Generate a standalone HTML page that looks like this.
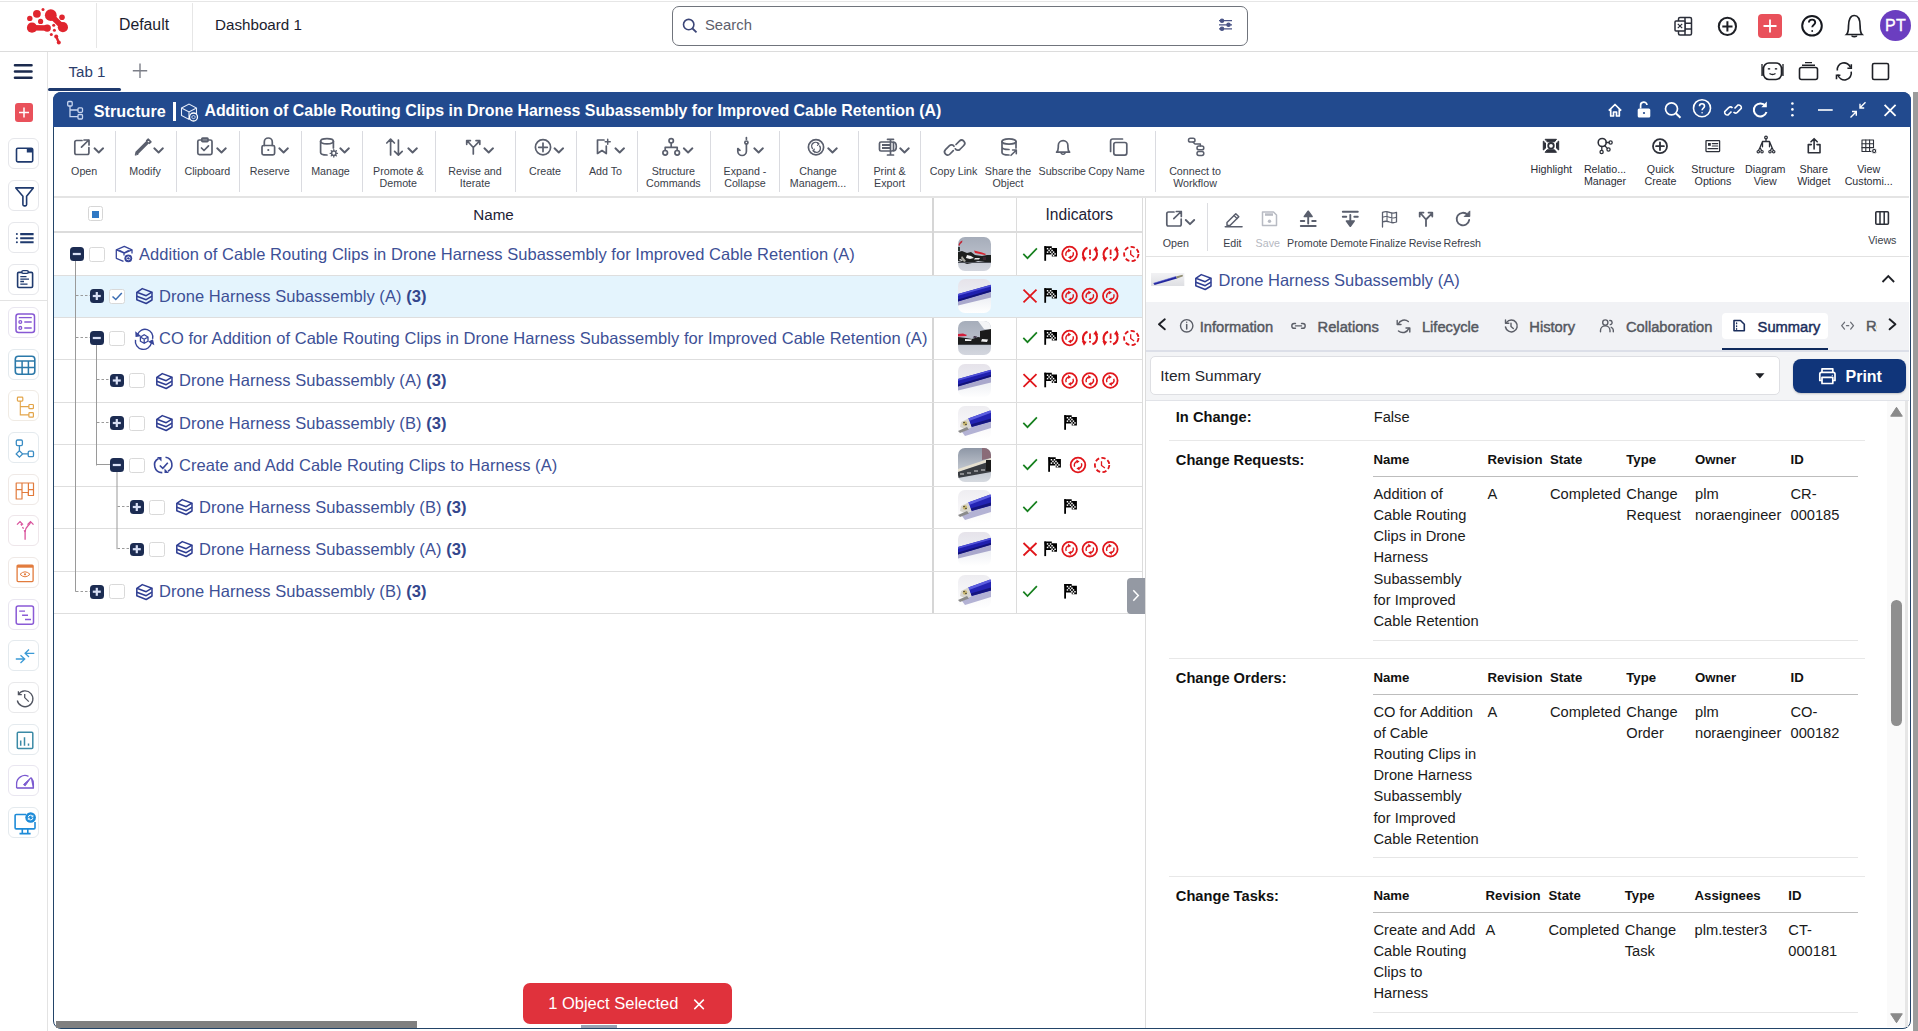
<!DOCTYPE html>
<html><head><meta charset="utf-8"><style>
*{box-sizing:border-box;margin:0;padding:0}
html,body{width:1918px;height:1031px;overflow:hidden;background:#fff;font-family:"Liberation Sans",sans-serif;color:#222}
body{position:relative}
.a{position:absolute}
svg.i{position:absolute;overflow:visible}
.hl{position:absolute;height:1px;background:#e3e3e3}
.vl{position:absolute;width:1px;background:#e3e3e3}
.t{position:absolute;white-space:nowrap;line-height:1}
.sb{position:absolute;left:8px;width:31px;height:31px;border:1px solid #e6e7eb;border-radius:6px;background:#fff}

.tl1{position:absolute;font-size:10.7px;line-height:12px;color:#3a3e49;white-space:nowrap;text-align:center;width:120px}
.tl2{position:absolute;font-size:10.7px;line-height:12px;color:#2b2e37;white-space:nowrap;text-align:center;width:120px}

.cb{position:absolute;width:15.5px;height:15px;border:1px solid #d9d9d9;border-radius:2.5px;background:#fff}
.xb{position:absolute;width:13.5px;height:13.5px;background:#1c2c52;border-radius:3.5px}
.nm{position:absolute;font-size:16.5px;color:#3d5096;white-space:nowrap;line-height:20px;letter-spacing:0.045px}
.nm b{font-weight:bold;color:#33468c}
.thumb{position:absolute;left:958px;width:33px;height:33.5px;border-radius:7px;overflow:hidden}

.rl{position:absolute;font-size:10.7px;line-height:12px;color:#3a3e49;white-space:nowrap;text-align:center;width:80px}
.tab{position:absolute;top:318.5px;font-size:14.7px;color:#55585f;white-space:nowrap;line-height:16px;-webkit-text-stroke:0.45px #55585f}

.sm{position:absolute;font-size:14.67px;color:#1a1a1a;white-space:nowrap;line-height:21px}
.sh{position:absolute;font-size:14.67px;font-weight:bold;color:#111;white-space:nowrap;line-height:21px}
.sh2{position:absolute;font-size:13.2px;font-weight:bold;color:#111;white-space:nowrap;line-height:21px}
</style></head><body>
<div class="hl" style="left:0;top:1px;width:1918px;background:#e6e6e6"></div>
<div class="hl" style="left:0;top:51px;width:1918px;background:#dcdcdc"></div>
<div class="vl" style="left:96px;top:3px;height:45px;background:#e6e6e6"></div>
<div class="vl" style="left:192px;top:3px;height:48px;background:#e6e6e6"></div>
<svg class="i" style="left:20px;top:4px" width="56" height="46" fill="#e0262f"><circle cx="23.0" cy="5.4" r="1.5"/><circle cx="16.9" cy="9.8" r="3.9"/><circle cx="9.8" cy="14.4" r="2.7"/><circle cx="20.6" cy="17.4" r="2.6"/><circle cx="12.0" cy="23.7" r="5.1"/><circle cx="27.2" cy="24.1" r="3.7"/><circle cx="30.8" cy="11.2" r="5.9"/><circle cx="42.9" cy="23.2" r="5.1"/><circle cx="42.0" cy="13.2" r="2.8"/><circle cx="33.7" cy="21.2" r="1.5"/><circle cx="34.4" cy="26.3" r="1.5"/><circle cx="31.3" cy="30.4" r="1.5"/><circle cx="36.2" cy="32.6" r="2.0"/><circle cx="38.8" cy="38.6" r="2.0"/><path d="M12 23.7 L27.2 24.1" stroke-width="5.5" stroke="#e0262f"/><path d="M30.8 11.2 L42.9 23.2" stroke-width="5.5" stroke="#e0262f"/><path d="M36.2 32.6 L38.8 38.6" stroke-width="2.4" stroke="#e0262f"/></svg>
<div class="t" style="left:119px;top:17px;font-size:15.8px;color:#1b1d2e">Default</div>
<div class="t" style="left:215px;top:17px;font-size:15.2px;color:#1b1d2e">Dashboard 1</div>
<div class="a" style="left:672px;top:6px;width:576px;height:40px;border:1.2px solid #70747c;border-radius:7px"></div>
<svg class="i" style="left:0;top:0" width="1" height="1"><circle cx="688.7" cy="24.6" r="5.2" fill="none" stroke="#3b4577" stroke-width="1.6"/><path d="M692.5 28.5 L696.5 32.3" stroke="#3b4577" stroke-width="1.8"/></svg>
<div class="t" style="left:705px;top:18.2px;font-size:14.8px;color:#5d606c">Search</div>
<svg class="i" style="left:0;top:0" width="1" height="1" stroke="#4a5486" stroke-width="1.3" fill="#4a5486"><path d="M1219 20.7H1232M1219 24.8H1232M1219 28.8H1232"/><circle cx="1222" cy="20.7" r="1.6"/><circle cx="1228.5" cy="24.8" r="1.6"/><circle cx="1222" cy="28.8" r="1.6"/></svg>
<svg class="i" style="left:0;top:0" width="1" height="1" fill="none" stroke="#2a2d38" stroke-width="1.5"><rect x="1678.5" y="17.5" width="13" height="17.5" rx="1.5"/><path d="M1678.5 23.3H1691.5M1678.5 29.1H1691.5M1685 17.5V35"/><rect x="1675" y="21" width="10" height="10" rx="1" fill="#fff"/><path d="M1677.8 23.8L1682.2 28.2M1682.2 23.8L1677.8 28.2" stroke-width="1.2"/></svg>
<svg class="i" style="left:0;top:0" width="1" height="1" fill="none" stroke="#1e2026" stroke-width="2"><circle cx="1727.4" cy="26.4" r="8.6"/><path d="M1727.4 21.3V31.5M1722.3 26.4H1732.5"/></svg>
<div class="a" style="left:1758px;top:14px;width:24px;height:24px;background:#e9515b;border-radius:4px"></div>
<svg class="i" style="left:0;top:0" width="1" height="1" stroke="#fff" stroke-width="1.8"><path d="M1770 19.5V32.5M1763.5 26H1776.5"/></svg>
<svg class="i" style="left:0;top:0" width="1" height="1" fill="none" stroke="#16181f" stroke-width="2"><circle cx="1812" cy="25.8" r="9.8"/><path d="M1808.9 22.6C1808.9 20.8 1810.3 19.6 1812.1 19.6C1813.9 19.6 1815.2 20.9 1815.2 22.5C1815.2 24.6 1812.2 24.8 1812.2 27.3" stroke-width="1.9"/><circle cx="1812.2" cy="31" r="0.9" fill="#16181f" stroke="none"/></svg>
<svg class="i" style="left:0;top:0" width="1" height="1" fill="none" stroke="#1e2026" stroke-width="1.7"><path d="M1846.5 34.5C1848.5 32.5 1848.5 30 1848.5 26C1848.5 19.5 1850.5 15.5 1854.3 15.5C1858.1 15.5 1860.1 19.5 1860.1 26C1860.1 30 1860.1 32.5 1862.1 34.5Z"/><path d="M1852 35.5C1852 37 1856.6 37 1856.6 35.5"/></svg>
<div class="a" style="left:1880px;top:10px;width:31px;height:31px;background:#6b3ec0;border-radius:50%"></div>
<div class="t" style="left:1880px;top:18px;width:31px;text-align:center;font-size:16px;color:#fff;letter-spacing:0.3px;-webkit-text-stroke:0.35px #fff">PT</div>
<div class="vl" style="left:47px;top:52px;height:979px;background:#e3e3e3"></div>
<div class="hl" style="left:0;top:300px;width:47px;background:#e3e3e3"></div>
<svg class="i" style="left:0;top:0" width="1" height="1" stroke="#1b2a4e" stroke-width="2.6" stroke-linecap="round"><path d="M15 65.3H31.5M15 71.5H31.5M15 77.8H31.5"/></svg>
<div class="a" style="left:15px;top:103px;width:18px;height:19px;background:#e9515b;border-radius:3px"></div>
<svg class="i" style="left:0;top:0" width="1" height="1" stroke="#fff" stroke-width="1.5"><path d="M24 107.5V117.5M19 112.5H29"/></svg>
<div class="sb" style="top:138px;border-color:#e6e7eb"><svg class="i" width="31" height="31" fill="none" stroke="#1f3a6e" stroke-width="1.35"><rect x="7.5" y="9.3" width="16.2" height="13.6" rx="1.3" stroke-width="1.6"/><rect x="17.8" y="9.3" width="5.9" height="4.2" fill="#1f3a6e" stroke="none"/></svg></div>
<div class="sb" style="top:180px;border-color:#e6e7eb"><svg class="i" width="31" height="31" fill="none" stroke="#1f3a6e" stroke-width="1.35"><path d="M6.8 6.9H24.3L17.6 15.2V23.6Q17.6 24.9 16.4 24.9H15.1Q13.9 24.9 13.9 23.6V15.2Z" stroke-linejoin="round" stroke-width="1.6"/></svg></div>
<div class="sb" style="top:222px;border-color:#e6e7eb"><svg class="i" width="31" height="31" fill="none" stroke="#1f3a6e" stroke-width="1.35"><path d="M11.2 11.1H24.6M11.2 15.3H24.6M11.2 19.3H24.6" stroke-width="2.1"/><circle cx="7.9" cy="11.1" r="1" fill="#1f3a6e" stroke="none"/><circle cx="7.9" cy="15.3" r="1" fill="#1f3a6e" stroke="none"/><circle cx="7.9" cy="19.3" r="1" fill="#1f3a6e" stroke="none"/></svg></div>
<div class="sb" style="top:264px;border-color:#e6e7eb"><svg class="i" width="31" height="31" fill="none" stroke="#1f3a6e" stroke-width="1.35"><rect x="8.6" y="7.4" width="15" height="15.1" rx="1.2" stroke-width="1.6"/><rect x="12.8" y="5.6" width="6.5" height="2.8" rx="1.3" fill="#fff" stroke-width="1.4"/><path d="M11.3 11.6H17.5M11.3 14.2H20M11.3 16.5H15M11.3 19.2H18.5" stroke-width="1.3"/></svg></div>
<div class="sb" style="top:307px;border-color:#e9e6f0"><svg class="i" width="31" height="31" fill="none" stroke="#8758d4" stroke-width="1.35"><rect x="7" y="6.1" width="18.5" height="18.4" rx="2.5" stroke-width="1.5"/><path d="M9.8 9.6H22.8" stroke-width="1.3"/><circle cx="11.3" cy="14" r="1.4" stroke-width="1.3"/><circle cx="11.3" cy="19.9" r="1.4" stroke-width="1.3"/><path d="M15.3 14H22.7M15.3 19.9H22.7" stroke-width="1.5"/></svg></div>
<div class="sb" style="top:349px;border-color:#e4eaee"><svg class="i" width="31" height="31" fill="none" stroke="#2b79a9" stroke-width="1.35"><rect x="6.3" y="6.3" width="19.5" height="18" rx="3" stroke-width="1.6"/><path d="M6.3 10.9H25.8M6.3 17.5H25.8M13.1 10.9V24.3M19.4 10.9V24.3" stroke-width="1.5"/></svg></div>
<div class="sb" style="top:390px;border-color:#f0ebe4"><svg class="i" width="31" height="31" fill="none" stroke="#e3a54a" stroke-width="1.35"><rect x="8.4" y="6.1" width="5.4" height="4" rx="0.8" stroke-width="1.2"/><rect x="19.9" y="13.5" width="4.5" height="4.2" rx="0.8" stroke-width="1.2"/><rect x="19.9" y="21.6" width="4.5" height="4.6" rx="0.8" stroke-width="1.2"/><path d="M11.3 10.1V23.9H19.9M11.3 15.6H19.9" stroke-width="1.1"/></svg></div>
<div class="sb" style="top:432px;border-color:#e4eaee"><svg class="i" width="31" height="31" fill="none" stroke="#3a8cc4" stroke-width="1.35"><rect x="7.3" y="7" width="6.1" height="5.6" rx="1.3" stroke-width="1.3"/><rect x="19.2" y="18.2" width="5.3" height="5.4" rx="1.2" stroke-width="1.3"/><path d="M10.4 12.6V17.7M10.4 17.7L13.6 20.9L10.4 24.1L7.2 20.9Z M13.6 20.9H19.2" stroke-width="1.3"/></svg></div>
<div class="sb" style="top:474px;border-color:#efe9e6"><svg class="i" width="31" height="31" fill="none" stroke="#e27b3c" stroke-width="1.35"><path d="M7.2 8H24.5V20.5H19.4V17.5H13V24H7.2Z" stroke-width="1.2" stroke-linejoin="round"/><path d="M13 8V17.5M19.4 8V20.5M7.2 14.6H13M19.4 14.6H24.5" stroke-width="1.2"/></svg></div>
<div class="sb" style="top:515px;border-color:#eee6ea"><svg class="i" width="31" height="31" fill="none" stroke="#d9539c" stroke-width="1.35"><path d="M16.1 23.7V16Q16.1 12.5 19 9.8Q21.5 7.5 21.5 6" stroke-width="1.3"/><path d="M16.1 16L11 6" stroke-width="1.3" stroke-dasharray="2 1.6"/><path d="M18.5 8.6L21.5 5.6L24.5 8.6M8 8.6L11 5.6L14 8.6" stroke-width="1.3"/></svg></div>
<div class="sb" style="top:557px;border-color:#efe9e6"><svg class="i" width="31" height="31" fill="none" stroke="#e27b3c" stroke-width="1.35"><rect x="8.1" y="7.1" width="16" height="16.5" rx="1" stroke-width="1.3"/><rect x="8.1" y="7.1" width="16" height="2.6" fill="#e27b3c" stroke="none"/><path d="M11 16.3Q16 11.3 21 16.3Q16 21.3 11 16.3Z" stroke-width="1"/><circle cx="16" cy="16.3" r="1.1" fill="#e27b3c" stroke="none"/></svg></div>
<div class="sb" style="top:599px;border-color:#e9e6f0"><svg class="i" width="31" height="31" fill="none" stroke="#8a5ad6" stroke-width="1.35"><rect x="7.2" y="6.1" width="17.3" height="18.1" rx="2" stroke-width="1.5"/><path d="M10.2 11.1H16M13.1 15.3H19M16 19.5H22" stroke-width="1.4"/></svg></div>
<div class="sb" style="top:640px;border-color:#e4eaee"><svg class="i" width="31" height="31" fill="none" stroke="#3b9ad6" stroke-width="1.35"><path d="M6.8 18H15.7M11.5 14.3L15.7 18L11.5 22M25.3 12.3H16.1M20 8.5L16.1 12.3L20 16" stroke-width="1.3"/></svg></div>
<div class="sb" style="top:682px;border-color:#e8e8ea"><svg class="i" width="31" height="31" fill="none" stroke="#505460" stroke-width="1.35"><path d="M9.5 11.3A7.9 7.9 0 1 1 8.3 17.5" stroke-width="1.3"/><path d="M9.4 8.2V11.6H12.8" stroke-width="1.3"/><path d="M15.7 10.9V14.6L19.8 18.6" stroke-width="1.3"/></svg></div>
<div class="sb" style="top:724px;border-color:#e4eaee"><svg class="i" width="31" height="31" fill="none" stroke="#3b8aa6" stroke-width="1.35"><rect x="8.3" y="7.3" width="15.5" height="16.2" rx="1" stroke-width="1.5"/><path d="M11.7 15.5V20.8M15.5 12.3V20.8M19.5 18.5V20.8" stroke-width="1.5"/></svg></div>
<div class="sb" style="top:765px;border-color:#e9e6f0"><svg class="i" width="31" height="31" fill="none" stroke="#7b5ad0" stroke-width="1.35"><path d="M7.6 22V18A8.4 8.4 0 0 1 19.5 10.3M22.5 12.2A8.4 8.4 0 0 1 24.4 18V22Z" stroke-width="1.3" stroke-linejoin="round"/><path d="M7.6 22H24.4" stroke-width="1.6"/><path d="M14.5 18.6L22 11.6L16.2 19.8Z" fill="#7b5ad0" stroke-width="1"/></svg></div>
<div class="sb" style="top:807px;border-color:#e4eaee"><svg class="i" width="31" height="31" fill="none" stroke="#1d8bd8" stroke-width="1.35"><path d="M17 6.5H7.2Q6.1 6.5 6.1 7.6V19.8Q6.1 20.9 7.2 20.9H24.9Q26 20.9 26 19.8V14" stroke-width="1.6"/><path d="M13.3 21V25M18.8 21V25M10.5 25.6H21.6" stroke-width="1.6"/><circle cx="21.6" cy="9.5" r="5.3" fill="#1d8bd8" stroke="none"/><path d="M19.2 9.3Q19.5 7.2 21.6 7.2Q22.9 7.2 23.7 8.3M24 9.8Q23.7 11.9 21.6 11.9Q20.3 11.9 19.5 10.8" stroke="#fff" stroke-width="1"/><path d="M23.9 7.2V8.8H22.3M19.3 11.9V10.3H20.9" stroke="#fff" stroke-width="0.9"/></svg></div>
<div class="t" style="left:68.5px;top:63.6px;font-size:15.1px;color:#2b3d6c">Tab 1</div>
<div class="a" style="left:48px;top:88px;width:73px;height:2.5px;background:#1f3a6e;border-radius:2px"></div>
<svg class="i" style="left:0;top:0" width="1" height="1" stroke="#7c7f88" stroke-width="1.4"><path d="M140 63.5V78M132.8 70.8H147.2"/></svg>
<svg class="i" style="left:0;top:0" width="1" height="1" fill="none" stroke="#1e2026" stroke-width="1.6"><rect x="1763.5" y="63" width="18" height="16.5" rx="5.5"/><path d="M1762.2 67V75.5M1782.8 67V75.5M1762 64V76M1783 64V76" stroke-width="1.3"/><path d="M1768 69.3Q1769 68 1770 69.3M1775 69.3Q1776 68 1777 69.3" stroke-width="1.3"/><path d="M1769.5 73.5Q1772.5 75.5 1775.5 73.5" stroke-width="1.5"/><rect x="1799.5" y="67.5" width="18" height="12" rx="2"/><path d="M1802 65.2H1815M1805 62.6H1812" stroke-width="1.4"/><path d="M1850.5 67.5A6.8 6.8 0 0 0 1837.3 70.5M1837.8 74.6A6.8 6.8 0 0 0 1851.2 71.6" /><path d="M1851.3 64.3V68.2H1847.4M1836.5 79.2V75.3H1840.4" /><rect x="1872.5" y="63.5" width="16" height="16" rx="1.5"/></svg>
<div class="a" style="left:53px;top:92px;width:1858px;height:937px;border:1.5px solid #234468;border-radius:8px;background:#fff"></div>
<div class="a" style="left:53px;top:92px;width:1858px;height:35px;background:#224a8e;border-radius:8px 8px 0 0"></div>
<div class="a" style="left:1913px;top:92px;width:5px;height:939px;background:#9c9c9c"></div>
<svg class="i" style="left:0;top:0" width="1" height="1" fill="none" stroke="#c9d6ef" stroke-width="1.3"><rect x="67.7" y="101.5" width="4.5" height="4.5" rx="1"/><rect x="78" y="107.8" width="4.5" height="4.5" rx="1"/><rect x="78" y="114.5" width="4.5" height="4.5" rx="1"/><path d="M70 106V116.7H78M70 110H78"/></svg>
<div class="t" style="left:93.8px;top:103.3px;font-size:16.2px;font-weight:bold;color:#fff">Structure</div>
<div class="a" style="left:172.5px;top:101.5px;width:3px;height:19px;background:#fff"></div>
<svg class="i" style="left:0;top:0" width="1" height="1" fill="none" stroke="#e8eefa" stroke-width="1.1"><path d="M181.5 108L189 104L196.5 108V115.5L189 119.5L181.5 115.5Z M181.5 108L189 112L196.5 108M189 112V119.5"/><circle cx="193.5" cy="117" r="4" fill="#224a8e" stroke="#fff" stroke-width="1.3"/><path d="M191.5 116.6Q193.5 114.5 195.5 116.6M191.5 117.6Q193.5 119.7 195.5 117.6" stroke-width="0.9"/></svg>
<div class="t" style="left:204.4px;top:103.3px;font-size:15.93px;font-weight:bold;color:#fff">Addition of Cable Routing Clips in Drone Harness Subassembly for Improved Cable Retention (A)</div>
<svg class="i" style="left:0;top:0" width="1" height="1" fill="none" stroke="#fff" stroke-width="1.7"><path d="M1608.8 110.6L1615 104.5L1621.2 110.6M1610.7 109V116H1613.5V112H1616.5V116H1619.3V109" stroke-linejoin="round"/><rect x="1637.7" y="108.5" width="12.6" height="9" rx="1.5" fill="#fff" stroke="none"/><path d="M1640.6 108.5V105.5A3.2 3.2 0 0 1 1647 105"/><circle cx="1644" cy="113" r="1.1" fill="#224a8e" stroke="none"/><circle cx="1671.5" cy="108.8" r="6"/><path d="M1675.8 113.2L1680.5 117.8" stroke-width="2"/><circle cx="1702" cy="108.2" r="8.5" stroke-width="1.6"/><path d="M1699.5 106.3C1699.5 104.8 1700.6 103.8 1702 103.8C1703.5 103.8 1704.5 104.9 1704.5 106.2C1704.5 108 1702.1 108.2 1702.1 110.3" stroke-width="1.6"/><circle cx="1702.1" cy="112.8" r="0.8" fill="#fff" stroke="none"/><path d="M1731.5 111.5L1728 115A2.8 2.8 0 0 1 1724.7 111.6L1728.7 107.7A2.8 2.8 0 0 1 1732.5 108M1734.5 108.5L1738 105A2.8 2.8 0 0 1 1741.3 108.4L1737.3 112.3A2.8 2.8 0 0 1 1733.5 112" stroke-width="1.6"/><path d="M1765.5 106A6.5 6.5 0 1 0 1766.5 112" stroke-width="2"/><path d="M1766.8 101.5V107.2H1761.3Z" fill="#fff" stroke="none"/><circle cx="1792.4" cy="103.5" r="1.3" fill="#fff" stroke="none"/><circle cx="1792.4" cy="109.4" r="1.3" fill="#fff" stroke="none"/><circle cx="1792.4" cy="115.2" r="1.3" fill="#fff" stroke="none"/><path d="M1818 110H1832.7" stroke-width="1.6"/><path d="M1850.5 117.5L1856 112M1852 111.5H1856.3V115.8M1865.5 102.2L1860 107.7M1860 103.8V108H1864.2" stroke-width="1.4"/><path d="M1884.6 104.8L1895.6 115.8M1895.6 104.8L1884.6 115.8" stroke-width="1.8"/></svg>
<div class="a" style="left:114.5px;top:131px;width:1px;height:61px;background:#dadbe0"></div>
<div class="a" style="left:175.5px;top:131px;width:1px;height:61px;background:#dadbe0"></div>
<div class="a" style="left:239.0px;top:131px;width:1px;height:61px;background:#dadbe0"></div>
<div class="a" style="left:300.5px;top:131px;width:1px;height:61px;background:#dadbe0"></div>
<div class="a" style="left:361.5px;top:131px;width:1px;height:61px;background:#dadbe0"></div>
<div class="a" style="left:435.0px;top:131px;width:1px;height:61px;background:#dadbe0"></div>
<div class="a" style="left:514.6px;top:131px;width:1px;height:61px;background:#dadbe0"></div>
<div class="a" style="left:575.6px;top:131px;width:1px;height:61px;background:#dadbe0"></div>
<div class="a" style="left:636.6px;top:131px;width:1px;height:61px;background:#dadbe0"></div>
<div class="a" style="left:710.4px;top:131px;width:1px;height:61px;background:#dadbe0"></div>
<div class="a" style="left:779.0px;top:131px;width:1px;height:61px;background:#dadbe0"></div>
<div class="a" style="left:857.7px;top:131px;width:1px;height:61px;background:#dadbe0"></div>
<div class="a" style="left:920.3px;top:131px;width:1px;height:61px;background:#dadbe0"></div>
<div class="a" style="left:1155.2px;top:131px;width:1px;height:61px;background:#dadbe0"></div>
<div class="a" style="left:54px;top:196px;width:1855px;height:2px;background:#e4e4e4"></div>
<div class="tl1" style="left:24.2px;top:164.5px">Open</div>
<div class="tl1" style="left:85.0px;top:164.5px">Modify</div>
<div class="tl1" style="left:147.3px;top:164.5px">Clipboard</div>
<div class="tl1" style="left:209.7px;top:164.5px">Reserve</div>
<div class="tl1" style="left:270.5px;top:164.5px">Manage</div>
<div class="tl1" style="left:338.3px;top:164.5px">Promote &amp;<br>Demote</div>
<div class="tl1" style="left:415.0px;top:164.5px">Revise and<br>Iterate</div>
<div class="tl1" style="left:485.0px;top:164.5px">Create</div>
<div class="tl1" style="left:545.5px;top:164.5px">Add To</div>
<div class="tl1" style="left:613.4px;top:164.5px">Structure<br>Commands</div>
<div class="tl1" style="left:685.0px;top:164.5px">Expand -<br>Collapse</div>
<div class="tl1" style="left:758.0px;top:164.5px">Change<br>Managem...</div>
<div class="tl1" style="left:829.5px;top:164.5px">Print &amp;<br>Export</div>
<div class="tl1" style="left:893.6px;top:164.5px">Copy Link</div>
<div class="tl1" style="left:948.0px;top:164.5px">Share the<br>Object</div>
<div class="tl1" style="left:1002.3px;top:164.5px">Subscribe</div>
<div class="tl1" style="left:1056.4px;top:164.5px">Copy Name</div>
<div class="tl1" style="left:1135.0px;top:164.5px">Connect to<br>Workflow</div>
<div class="tl2" style="left:1491.3px;top:162.5px">Highlight</div>
<div class="tl2" style="left:1545.0px;top:162.5px">Relatio...<br>Manager</div>
<div class="tl2" style="left:1600.5px;top:162.5px">Quick<br>Create</div>
<div class="tl2" style="left:1653.0px;top:162.5px">Structure<br>Options</div>
<div class="tl2" style="left:1705.3px;top:162.5px">Diagram<br>View</div>
<div class="tl2" style="left:1753.8px;top:162.5px">Share<br>Widget</div>
<div class="tl2" style="left:1808.7px;top:162.5px">View<br>Customi...</div>
<svg class="i" style="left:0;top:0" width="1" height="1" fill="none" stroke="#5a5f6d" stroke-width="1.7" stroke-linecap="round" stroke-linejoin="round"><path d="M82 140.5H76.5Q74.8 140.5 74.8 142.2V152.8Q74.8 154.5 76.5 154.5H87.2Q88.9 154.5 88.9 152.8V147.5"/><path d="M81.5 147.2L88.8 140M84 140H89V145"/><path d="M94.5 148.3L98.8 152.5L103.1 148.3" stroke-width="1.9"/><path d="M136.5 153.2L148 141.7" stroke-width="3.6" stroke-linecap="butt"/><path d="M135.3 154.8L136 152.3L137.8 154.1Z" fill="#5a5f6d" stroke-width="1"/><path d="M146.8 140.6L148.3 139.3L150.8 141.8L149.4 143.2" stroke-width="1.8"/><path d="M154.3 148.3L158.6 152.5L162.9 148.3" stroke-width="1.9"/><rect x="197.8" y="140" width="14.2" height="14.6" rx="1.6"/><rect x="201.8" y="138.2" width="6.2" height="3.4" rx="0.8"/><path d="M201.5 148L204 150.5L208.5 145.8"/><path d="M217.2 148.3L221.5 152.5L225.8 148.3" stroke-width="1.9"/><rect x="262" y="145.5" width="12.6" height="9.3" rx="1.6"/><path d="M264.3 145.5V142A4 4 0 0 1 272.3 142V145.5"/><circle cx="268.3" cy="150" r="1.1" fill="#5a5f6d" stroke="none"/><path d="M279.3 148.3L283.6 152.5L287.9 148.3" stroke-width="1.9"/><ellipse cx="327" cy="141.3" rx="6.4" ry="2.6"/><path d="M320.6 141.3V152.5Q320.6 155 327 155M333.4 141.3V148"/><circle cx="333.8" cy="153.3" r="2.2" stroke-width="1.5"/><path d="M333.8 149.6V150.6M333.8 156V157M330.1 153.3H331.1M336.5 153.3H337.5M331.2 150.7L331.9 151.4M335.7 155.2L336.4 155.9M331.2 155.9L331.9 155.2M335.7 151.4L336.4 150.7" stroke-width="1.3"/><path d="M340.3 148.3L344.6 152.5L348.9 148.3" stroke-width="1.9"/><path d="M390.6 155V139.3M386.8 143L390.6 139.2L394.4 143M398.4 140V155M394.6 151.3L398.4 155.1L402.2 151.3"/><path d="M408.3 148.3L412.6 152.5L416.9 148.3" stroke-width="1.9"/><path d="M473.3 154V147.5L467.3 141M473.3 147.5L479.5 141.2M466.7 144.3V140.6H470.4M476 140.6H479.8V144.3"/><path d="M484.4 148.3L488.7 152.5L493.0 148.3" stroke-width="1.9"/><circle cx="543" cy="147.3" r="7.6"/><path d="M543 143V151.6M538.7 147.3H547.3"/><path d="M554.5 148.3L558.8 152.5L563.1 148.3" stroke-width="1.9"/><path d="M604 140H597.5V153.5L602 150.5L606.3 153.5V146"/><path d="M607.7 139.3V144.3M605.2 141.8H610.2" stroke-width="1.5"/><path d="M615.4 148.3L619.7 152.5L624.0 148.3" stroke-width="1.9"/><circle cx="671.2" cy="140.8" r="2.2"/><circle cx="665.2" cy="152.8" r="2.3"/><circle cx="677.2" cy="152.8" r="2.3"/><path d="M671.2 143V147.3M665.2 150.5V147.3H677.2V150.5"/><path d="M683.8 148.3L688.1 152.5L692.4 148.3" stroke-width="1.9"/><circle cx="746.4" cy="142.6" r="1.6"/><path d="M746.4 139.2V137.6M746.4 144.2V151.2A4.3 4.3 0 0 1 737.8 151.2V148.5L740 150.3"/><path d="M754.3 148.3L758.6 152.5L762.9 148.3" stroke-width="1.9"/><circle cx="816" cy="147.3" r="7.6"/><path d="M812.5 148.5A3.7 3.7 0 0 1 818.5 143.8M819.6 146A3.7 3.7 0 0 1 813.5 150.8" stroke-width="1.4"/><path d="M817.3 142.6L819 143.9L817.5 145.4M814.7 152L813 150.7L814.4 149.2" stroke-width="1.2"/><path d="M828.2 148.3L832.5 152.5L836.8 148.3" stroke-width="1.9"/><rect x="879.5" y="142" width="14" height="9" rx="1.5"/><path d="M882 145H891M882 148H891" stroke-width="2.2" stroke-linecap="butt"/><path d="M887.5 139.3H893.5M887.5 155H893.5M890.5 139.3V155M893.6 142.2Q896.3 142.5 896.3 146.5Q896.3 150.5 893.6 150.8"/><path d="M900.2 148.3L904.5 152.5L908.8 148.3" stroke-width="1.9"/><path d="M953.3 150.7L950 154A3 3 0 0 1 945.5 149.6L949.5 145.6A3 3 0 0 1 954 146.3"/><path d="M956 144.5L959.4 141.1A3 3 0 0 1 963.8 145.5L959.8 149.5A3 3 0 0 1 955.3 148.8"/><ellipse cx="1009" cy="141.5" rx="7" ry="2.7"/><path d="M1002 141.5V152.5Q1002 155 1009 155M1016 141.5V148M1002 147Q1002 149.5 1009 149.5"/><path d="M1011 155.3L1016.2 150.2M1012.6 150H1016.3V153.8" stroke-width="1.6"/><path d="M1056.6 152.2Q1058.3 150.8 1058.3 147V145.5A4.8 4.8 0 0 1 1067.9 145.5V147Q1067.9 150.8 1069.6 152.2Z"/><path d="M1061.2 153.2Q1063.1 155.5 1065 153.2" stroke-width="1.5"/><rect x="1113.8" y="142.5" width="13" height="12.6" rx="2"/><path d="M1110.6 151.5V141.2Q1110.6 139 1112.8 139H1122.5"/><rect x="1188.5" y="138.3" width="6.5" height="3.8" rx="1.9" stroke-width="1.5"/><rect x="1197" y="146" width="6.8" height="3.8" rx="1.9" stroke-width="1.5"/><rect x="1197" y="151.6" width="6.8" height="3.8" rx="1.9" stroke-width="1.5"/><path d="M1193 142.2L1195 144L1200.4 144L1200.4 146" stroke-width="1.4"/></svg>
<svg class="i" style="left:0;top:0" width="1" height="1" fill="none" stroke="#2d3039" stroke-width="1.6" stroke-linecap="round" stroke-linejoin="round"><circle cx="1551" cy="145.8" r="2.8" stroke-width="1.8"/><path d="M1545.5 139.3H1556.5L1554.5 141.8H1547.5Z M1545.5 152.3H1556.5L1554.5 149.8H1547.5Z M1543.3 141.5V150L1545.5 148.2V143.3Z M1558.7 141.5V150L1556.5 148.2V143.3Z" fill="#2d3039" stroke-width="1"/><circle cx="1602.2" cy="142.5" r="4" /><circle cx="1610.6" cy="142.5" r="1.6" stroke-width="1.3"/><circle cx="1601.6" cy="152" r="1.6" stroke-width="1.3"/><circle cx="1608.5" cy="149.5" r="1.6" stroke-width="1.3"/><path d="M1606.2 142.5H1609M1601.8 146.5V150.4M1604.6 145.5L1607.3 148.4" stroke-width="1.3"/><circle cx="1660" cy="146.2" r="7" stroke-width="1.8"/><path d="M1660 142.3V150.1M1656.1 146.2H1663.9" stroke-width="1.8"/><rect x="1706" y="140.6" width="13.6" height="11" rx="0.5" stroke-width="1.3"/><rect x="1708" y="143" width="2.8" height="2.8" fill="#2d3039" stroke="none"/><path d="M1712.3 143.6H1717.7M1712.3 146H1717.7M1708 148.6H1717.7" stroke-width="1.2"/><circle cx="1766" cy="137.5" r="1.3" stroke-width="1.3"/><path d="M1766 138.8V141.5H1762.5L1760 147.5M1766 141.5H1769.5L1772 147.5M1762.5 141.5V146.8M1769.5 141.5V146.8M1760 147.5L1758.5 150.5M1760 147.5L1761.5 150.5M1772 147.5L1770.5 150.5M1772 147.5L1773.5 150.5" stroke-width="1.3"/><circle cx="1758.3" cy="151.7" r="1.2" stroke-width="1.2"/><circle cx="1762" cy="151.7" r="1.2" stroke-width="1.2"/><circle cx="1770" cy="151.7" r="1.2" stroke-width="1.2"/><circle cx="1773.7" cy="151.7" r="1.2" stroke-width="1.2"/><path d="M1811.3 144.6H1808.3V152.7H1820V144.6H1817M1814.1 149V139M1811 141.8L1814.1 138.7L1817.2 141.8" stroke-width="1.6"/><rect x="1862" y="140" width="11.5" height="11.5" stroke-width="1.1"/><path d="M1862 143.8H1873.5M1862 147.6H1873.5M1865.8 140V151.5M1869.6 140V151.5" stroke-width="1.1"/><circle cx="1874.2" cy="151" r="2.6" fill="#2d3039" stroke="#fff" stroke-width="0.8"/><circle cx="1874.2" cy="151" r="0.9" fill="#fff" stroke="none"/></svg>
<div class="a" style="left:54px;top:231px;width:1089px;height:2px;background:#dcdcdc"></div>
<div class="a" style="left:88.3px;top:206.3px;width:14.5px;height:15px;border:1px solid #d6d6d6;border-radius:2.5px"></div>
<div class="a" style="left:92.2px;top:211px;width:6.8px;height:6.9px;background:#2f78c4"></div>
<div class="t" style="left:473.3px;top:206.5px;font-size:15.2px;color:#1e2235">Name</div>
<div class="t" style="left:1045.5px;top:206.8px;font-size:15.6px;color:#1e2235">Indicators</div>
<div class="a" style="left:932px;top:198px;width:1.5px;height:415px;background:#d6d6d6"></div>
<div class="a" style="left:1016px;top:198px;width:1px;height:415px;background:#dcdcdc"></div>
<div class="a" style="left:1142px;top:198px;width:1px;height:415px;background:#dcdcdc"></div>
<div class="a" style="left:54px;top:276px;width:1088px;height:41px;background:#e4f4fd"></div>
<div class="a" style="left:54px;top:275.0px;width:1088px;height:1px;background:#dedede"></div>
<div class="a" style="left:54px;top:317.0px;width:1088px;height:1px;background:#dedede"></div>
<div class="a" style="left:54px;top:359.0px;width:1088px;height:1px;background:#dedede"></div>
<div class="a" style="left:54px;top:402.0px;width:1088px;height:1px;background:#dedede"></div>
<div class="a" style="left:54px;top:444.0px;width:1088px;height:1px;background:#dedede"></div>
<div class="a" style="left:54px;top:486.0px;width:1088px;height:1px;background:#dedede"></div>
<div class="a" style="left:54px;top:528.0px;width:1088px;height:1px;background:#dedede"></div>
<div class="a" style="left:54px;top:570.5px;width:1088px;height:1px;background:#dedede"></div>
<div class="a" style="left:54px;top:613.0px;width:1088px;height:1px;background:#dedede"></div>
<svg class="i" style="left:0;top:0" width="1" height="1"><rect x="75" y="261" width="1" height="330.8" fill="#9a9a9a"/><rect x="96" y="345" width="1" height="120.5" fill="#9a9a9a"/><rect x="116.5" y="471" width="1" height="78.2" fill="#9a9a9a"/><path d="M76 295.5H90" stroke="#9a9a9a" stroke-width="1" stroke-dasharray="2.5 2"/><path d="M76 337.5H90" stroke="#9a9a9a" stroke-width="1" stroke-dasharray="2.5 2"/><path d="M76 591.5H90" stroke="#9a9a9a" stroke-width="1" stroke-dasharray="2.5 2"/><path d="M97 379.5H110" stroke="#9a9a9a" stroke-width="1" stroke-dasharray="2.5 2"/><path d="M97 422.5H110" stroke="#9a9a9a" stroke-width="1" stroke-dasharray="2.5 2"/><path d="M97 464.5H110" stroke="#9a9a9a" stroke-width="1"/><path d="M117.5 506.5H130" stroke="#9a9a9a" stroke-width="1" stroke-dasharray="2.5 2"/><path d="M117.5 548.5H130" stroke="#9a9a9a" stroke-width="1" stroke-dasharray="2.5 2"/></svg>
<div class="xb" style="left:70.0px;top:247.2px"></div>
<div class="cb" style="left:89.3px;top:246.5px"></div>
<svg class="i" style="left:0;top:0" width="1" height="1" fill="none" stroke="#37459a" stroke-width="1.3" stroke-linejoin="round"><path d="M123.5 261.3L116.3 258.3V249.8L124.3 246.3L132 249.8V253.5"/><path d="M116.5 249.8L124.3 253.2L132 249.8M119.3 250.3L124.3 252.8L128.8 250.3M124 253V255.5" /><circle cx="128.3" cy="258.3" r="3.9" fill="#37459a" stroke="none"/><path d="M126.3 257.8Q128.3 255.7 130.3 257.8M126.3 258.8Q128.3 260.9 130.3 258.8" stroke="#fff" stroke-width="0.9"/></svg>
<div class="nm" style="left:139.0px;top:243.5px">Addition of Cable Routing Clips in Drone Harness Subassembly for Improved Cable Retention (A)</div>
<div class="thumb" style="top:237.0px"><svg width="33" height="34"><defs><linearGradient id="gd254" x1="0" y1="0" x2="0" y2="1"><stop offset="0" stop-color="#a6adba"/><stop offset="0.4" stop-color="#b3b9c5"/><stop offset="0.62" stop-color="#b8bdc7"/><stop offset="0.75" stop-color="#c9cdd6"/><stop offset="1" stop-color="#d3d6de"/></linearGradient></defs><rect width="33" height="34" fill="url(#gd254)"/><path d="M0 15L4 14L9 16L13 15L17 18L24 19L29 18L33 18V25L27 25L20 24L14 26L9 27L4 25L0 24Z" fill="#1d1f1e"/><path d="M9 18L13 19L16 21L12 22L8 21Z" fill="#f2f2f2"/><path d="M17 21L22 21L21 22.5L16 22.5Z" fill="#e8e8e8"/><path d="M2 22L5 23L4 24L1 23Z" fill="#e0e0e0"/><path d="M4 19L8 24L6 25L3 21Z" fill="#a8a8a0"/><path d="M25 20L28 20L28 23L25 23Z" fill="#3a2630"/><path d="M16 13.5L24 15.5L28 17L27 18L17 16Z" fill="#d7232e"/><path d="M0.5 8Q1.5 4 4.5 3.5L4 5.5Q2 6.5 1.5 9Z" fill="#c02838"/><path d="M0 10L2 10L2 14L0 14Z" fill="#2e3a38"/><path d="M0 25H33V26H0Z" fill="#4a4e55"/></svg></div>
<div class="xb" style="left:90.0px;top:289.2px"></div>
<div class="cb" style="left:109.3px;top:288.5px"></div>
<svg class="i" style="left:136.0px;top:288.0px" width="17" height="17" fill="none" stroke="#2e3d92" stroke-width="1.5" stroke-linejoin="round"><path d="M0.8 4.3L6.3 0.6L16 4.2L10.2 7.7Z"/><path d="M0.8 4.3V11.8L10.2 15.5L16 12V4.2"/><path d="M0.8 8.2L10.2 11.7L16 8.1"/><path d="M10.2 7.7V15.5" stroke-width="0"/></svg>
<div class="nm" style="left:159.0px;top:285.5px">Drone Harness Subassembly (A) <b>(3)</b></div>
<div class="thumb" style="top:279.0px"><svg width="33" height="34"><defs><linearGradient id="ga296" x1="0" y1="0" x2="0" y2="1"><stop offset="0" stop-color="#e6e3ea"/><stop offset="0.5" stop-color="#eceef3"/><stop offset="1" stop-color="#ffffff"/></linearGradient></defs><rect width="33" height="34" fill="url(#ga296)"/><path d="M0 22.4L33 12.8V18.5L0 26.5Z" fill="#a9a8cc"/><path d="M0 15L33 5.8V12.8L0 22.4Z" fill="#1f1fae"/><path d="M0 15L33 5.8V7.6L0 16.8Z" fill="#4d4fd8"/><path d="M0 20.4L33 10.8V12.8L0 22.4Z" fill="#121278"/></svg></div>
<div class="xb" style="left:90.0px;top:331.2px"></div>
<div class="cb" style="left:109.3px;top:330.5px"></div>
<svg class="i" style="left:0;top:0" width="1" height="1" fill="none" stroke="#37459a" stroke-width="1.4"><path d="M137.7 334.3A7.8 7.8 0 0 1 152.6 338.8M151.4 342.8A7.8 7.8 0 0 1 135.5 339.8"/><path d="M136 332.8L136.2 336.3L139.7 335.8Z M153.3 343.8L152.5 340.3L149.6 341.7Z" fill="#37459a"/><path d="M144.2 334.8L148 337V341.2L144.2 343.3L140.4 341.2V337Z M140.4 337L144.2 339.2L148 337M144.2 339.2V343.3" stroke-width="1.3"/></svg>
<div class="nm" style="left:159.0px;top:327.5px">CO for Addition of Cable Routing Clips in Drone Harness Subassembly for Improved Cable Retention (A)</div>
<div class="thumb" style="top:321.0px"><svg width="33" height="34"><defs><linearGradient id="gd338" x1="0" y1="0" x2="0" y2="1"><stop offset="0" stop-color="#a6adba"/><stop offset="0.4" stop-color="#b3b9c5"/><stop offset="0.62" stop-color="#b8bdc7"/><stop offset="0.75" stop-color="#c9cdd6"/><stop offset="1" stop-color="#d3d6de"/></linearGradient></defs><rect width="33" height="34" fill="url(#gd338)"/><path d="M20 0H33V9L26 8Z" fill="#f4f5f7"/><path d="M22 10L33 8V17L22 17Z" fill="#1a1a1a"/><path d="M0 16L8 17L14 18L20 16L26 17L33 17V23L26 24L18 23L10 24L4 24L0 23Z" fill="#1c1d1d"/><path d="M7 18L14 18.5L13 20L7 20Z" fill="#f0f0f0"/><path d="M24 18L30 18.5L29 21L23 20.5Z" fill="#eeeeee"/><path d="M16 15L19 15.5L18 17L15 16.5Z" fill="#3a2b40"/><path d="M0 13L5 12.5L9 14L8 15L0 15.5Z" fill="#d21f3a"/><path d="M0 23H33V24H0Z" fill="#42464c"/></svg></div>
<div class="xb" style="left:110.0px;top:373.8px"></div>
<div class="cb" style="left:129.3px;top:373.0px"></div>
<svg class="i" style="left:156.0px;top:372.5px" width="17" height="17" fill="none" stroke="#2e3d92" stroke-width="1.5" stroke-linejoin="round"><path d="M0.8 4.3L6.3 0.6L16 4.2L10.2 7.7Z"/><path d="M0.8 4.3V11.8L10.2 15.5L16 12V4.2"/><path d="M0.8 8.2L10.2 11.7L16 8.1"/><path d="M10.2 7.7V15.5" stroke-width="0"/></svg>
<div class="nm" style="left:179.0px;top:370.0px">Drone Harness Subassembly (A) <b>(3)</b></div>
<div class="thumb" style="top:363.5px"><svg width="33" height="34"><defs><linearGradient id="ga380" x1="0" y1="0" x2="0" y2="1"><stop offset="0" stop-color="#e6e3ea"/><stop offset="0.5" stop-color="#eceef3"/><stop offset="1" stop-color="#ffffff"/></linearGradient></defs><rect width="33" height="34" fill="url(#ga380)"/><path d="M0 22.4L33 12.8V18.5L0 26.5Z" fill="#a9a8cc"/><path d="M0 15L33 5.8V12.8L0 22.4Z" fill="#1f1fae"/><path d="M0 15L33 5.8V7.6L0 16.8Z" fill="#4d4fd8"/><path d="M0 20.4L33 10.8V12.8L0 22.4Z" fill="#121278"/></svg></div>
<div class="xb" style="left:110.0px;top:416.2px"></div>
<div class="cb" style="left:129.3px;top:415.5px"></div>
<svg class="i" style="left:156.0px;top:415.0px" width="17" height="17" fill="none" stroke="#2e3d92" stroke-width="1.5" stroke-linejoin="round"><path d="M0.8 4.3L6.3 0.6L16 4.2L10.2 7.7Z"/><path d="M0.8 4.3V11.8L10.2 15.5L16 12V4.2"/><path d="M0.8 8.2L10.2 11.7L16 8.1"/><path d="M10.2 7.7V15.5" stroke-width="0"/></svg>
<div class="nm" style="left:179.0px;top:412.5px">Drone Harness Subassembly (B) <b>(3)</b></div>
<div class="thumb" style="top:406.0px"><svg width="33" height="34"><defs><linearGradient id="gb423" x1="0" y1="0" x2="0" y2="1"><stop offset="0" stop-color="#eeedf1"/><stop offset="1" stop-color="#ffffff"/></linearGradient></defs><rect width="33" height="34" fill="url(#gb423)"/><path d="M13.5 21L33 15.4V22L7 30L4 26Z" fill="#b3b2d4"/><path d="M10.2 12.5L33 4.2V15.4L13.5 21Z" fill="#2424b4"/><path d="M10.2 12.5L33 4.2V6.8L11 15Z" fill="#5c5ee0"/><path d="M12.5 18.5L33 12.5V15.4L13.5 21Z" fill="#15157e"/><path d="M3 16L10.2 12.5L13.5 21L8 23.5L2 21Z" fill="#d8d6d0"/><circle cx="7" cy="17.5" r="2.2" fill="#c9b870"/><circle cx="6" cy="16.5" r="0.7" fill="#222"/><circle cx="8" cy="18.5" r="0.7" fill="#222"/><path d="M0 25L9 21L11 23.5L2 27Z" fill="#8b8b8b"/></svg></div>
<div class="xb" style="left:110.0px;top:458.2px"></div>
<div class="cb" style="left:129.3px;top:457.5px"></div>
<svg class="i" style="left:0;top:0" width="1" height="1" fill="none" stroke="#37459a" stroke-width="1.6"><path d="M158.5 458.5A7.5 7.5 0 0 0 162.3 472.6M165.5 457.3A7.5 7.5 0 0 1 168 471.3"/><path d="M157 457L161.5 457L161.5 461.5Z M169 473L164.5 473L164.5 468.5Z" fill="#37459a" stroke="none"/><path d="M159.8 465.5L162.8 468.4L167.8 462.8"/></svg>
<div class="nm" style="left:179.0px;top:454.5px">Create and Add Cable Routing Clips to Harness (A)</div>
<div class="thumb" style="top:448.0px"><svg width="33" height="34"><defs><linearGradient id="gt465" x1="0" y1="0" x2="0" y2="1"><stop offset="0" stop-color="#8e97a6"/><stop offset="0.5" stop-color="#b7bdc7"/><stop offset="1" stop-color="#d6dae0"/></linearGradient></defs><rect width="33" height="34" fill="url(#gt465)"/><path d="M24 0H33V10L24 12Z" fill="#8a6c78"/><path d="M0 21L33 10V13L0 24Z" fill="#e6e0d0"/><path d="M0 24L33 13V24L0 30Z" fill="#3a3d42"/><path d="M2 26H6M9 25H13M16 23H20M23 22H27" stroke="#d8d8d8" stroke-width="1.2"/><path d="M28 12H33V23H28Z" fill="#1a1a1a"/></svg></div>
<div class="xb" style="left:130.0px;top:500.2px"></div>
<div class="cb" style="left:149.3px;top:499.5px"></div>
<svg class="i" style="left:176.0px;top:499.0px" width="17" height="17" fill="none" stroke="#2e3d92" stroke-width="1.5" stroke-linejoin="round"><path d="M0.8 4.3L6.3 0.6L16 4.2L10.2 7.7Z"/><path d="M0.8 4.3V11.8L10.2 15.5L16 12V4.2"/><path d="M0.8 8.2L10.2 11.7L16 8.1"/><path d="M10.2 7.7V15.5" stroke-width="0"/></svg>
<div class="nm" style="left:199.0px;top:496.5px">Drone Harness Subassembly (B) <b>(3)</b></div>
<div class="thumb" style="top:490.0px"><svg width="33" height="34"><defs><linearGradient id="gb507" x1="0" y1="0" x2="0" y2="1"><stop offset="0" stop-color="#eeedf1"/><stop offset="1" stop-color="#ffffff"/></linearGradient></defs><rect width="33" height="34" fill="url(#gb507)"/><path d="M13.5 21L33 15.4V22L7 30L4 26Z" fill="#b3b2d4"/><path d="M10.2 12.5L33 4.2V15.4L13.5 21Z" fill="#2424b4"/><path d="M10.2 12.5L33 4.2V6.8L11 15Z" fill="#5c5ee0"/><path d="M12.5 18.5L33 12.5V15.4L13.5 21Z" fill="#15157e"/><path d="M3 16L10.2 12.5L13.5 21L8 23.5L2 21Z" fill="#d8d6d0"/><circle cx="7" cy="17.5" r="2.2" fill="#c9b870"/><circle cx="6" cy="16.5" r="0.7" fill="#222"/><circle cx="8" cy="18.5" r="0.7" fill="#222"/><path d="M0 25L9 21L11 23.5L2 27Z" fill="#8b8b8b"/></svg></div>
<div class="xb" style="left:130.0px;top:542.5px"></div>
<div class="cb" style="left:149.3px;top:541.8px"></div>
<svg class="i" style="left:176.0px;top:541.2px" width="17" height="17" fill="none" stroke="#2e3d92" stroke-width="1.5" stroke-linejoin="round"><path d="M0.8 4.3L6.3 0.6L16 4.2L10.2 7.7Z"/><path d="M0.8 4.3V11.8L10.2 15.5L16 12V4.2"/><path d="M0.8 8.2L10.2 11.7L16 8.1"/><path d="M10.2 7.7V15.5" stroke-width="0"/></svg>
<div class="nm" style="left:199.0px;top:538.8px">Drone Harness Subassembly (A) <b>(3)</b></div>
<div class="thumb" style="top:532.2px"><svg width="33" height="34"><defs><linearGradient id="ga549" x1="0" y1="0" x2="0" y2="1"><stop offset="0" stop-color="#e6e3ea"/><stop offset="0.5" stop-color="#eceef3"/><stop offset="1" stop-color="#ffffff"/></linearGradient></defs><rect width="33" height="34" fill="url(#ga549)"/><path d="M0 22.4L33 12.8V18.5L0 26.5Z" fill="#a9a8cc"/><path d="M0 15L33 5.8V12.8L0 22.4Z" fill="#1f1fae"/><path d="M0 15L33 5.8V7.6L0 16.8Z" fill="#4d4fd8"/><path d="M0 20.4L33 10.8V12.8L0 22.4Z" fill="#121278"/></svg></div>
<div class="xb" style="left:90.0px;top:585.0px"></div>
<div class="cb" style="left:109.3px;top:584.2px"></div>
<svg class="i" style="left:136.0px;top:583.8px" width="17" height="17" fill="none" stroke="#2e3d92" stroke-width="1.5" stroke-linejoin="round"><path d="M0.8 4.3L6.3 0.6L16 4.2L10.2 7.7Z"/><path d="M0.8 4.3V11.8L10.2 15.5L16 12V4.2"/><path d="M0.8 8.2L10.2 11.7L16 8.1"/><path d="M10.2 7.7V15.5" stroke-width="0"/></svg>
<div class="nm" style="left:159.0px;top:581.2px">Drone Harness Subassembly (B) <b>(3)</b></div>
<div class="thumb" style="top:574.8px"><svg width="33" height="34"><defs><linearGradient id="gb591" x1="0" y1="0" x2="0" y2="1"><stop offset="0" stop-color="#eeedf1"/><stop offset="1" stop-color="#ffffff"/></linearGradient></defs><rect width="33" height="34" fill="url(#gb591)"/><path d="M13.5 21L33 15.4V22L7 30L4 26Z" fill="#b3b2d4"/><path d="M10.2 12.5L33 4.2V15.4L13.5 21Z" fill="#2424b4"/><path d="M10.2 12.5L33 4.2V6.8L11 15Z" fill="#5c5ee0"/><path d="M12.5 18.5L33 12.5V15.4L13.5 21Z" fill="#15157e"/><path d="M3 16L10.2 12.5L13.5 21L8 23.5L2 21Z" fill="#d8d6d0"/><circle cx="7" cy="17.5" r="2.2" fill="#c9b870"/><circle cx="6" cy="16.5" r="0.7" fill="#222"/><circle cx="8" cy="18.5" r="0.7" fill="#222"/><path d="M0 25L9 21L11 23.5L2 27Z" fill="#8b8b8b"/></svg></div>
<svg class="i" style="left:0;top:0" width="1" height="1"><path d="M1023.3 253.9L1027.5 258.2L1036.9 248.4" stroke="#17801f" stroke-width="1.7" fill="none"/><rect x="1044.3" y="246.2" width="1.8" height="14.6" fill="#000"/><path d="M1044.3 246.2H1051.8V248.0H1057.0V256.4H1051.8V254.6H1045.8Z" fill="#000"/><rect x="1046.8" y="248.0" width="1.5" height="1.5" fill="#fff"/><rect x="1049.8" y="248.0" width="1.5" height="1.5" fill="#fff"/><rect x="1048.3" y="249.7" width="1.5" height="1.5" fill="#fff"/><rect x="1051.3" y="249.7" width="1.5" height="1.5" fill="#fff"/><rect x="1046.8" y="251.4" width="1.5" height="1.5" fill="#fff"/><rect x="1049.8" y="251.4" width="1.5" height="1.5" fill="#fff"/><rect x="1052.8" y="251.4" width="1.5" height="1.5" fill="#fff"/><rect x="1054.3" y="253.2" width="1.5" height="1.5" fill="#fff"/><rect x="1051.3" y="253.2" width="1.5" height="1.5" fill="#fff"/><rect x="1052.8" y="254.8" width="1.5" height="1.5" fill="#fff"/><circle cx="1069.6" cy="254.0" r="7.3" stroke="#e0161b" stroke-width="1.8" fill="none"/><path d="M1066.2 255.8A3.9 3.9 0 0 1 1069.0 250.4M1073.0 252.2A3.9 3.9 0 0 1 1070.2 257.6" stroke="#e0161b" stroke-width="1.4" fill="none"/><path d="M1068.0 248.4L1071.2 250.6L1068.2 252.4ZM1071.2 259.6L1068.0 257.4L1071.0 255.6Z" fill="#e0161b"/><path d="M1084.5 258.5A6.8 6.8 0 0 1 1087.5 247.8" stroke="#e0161b" stroke-width="2" fill="none"/><path d="M1095.6 249.8A6.8 6.8 0 0 1 1092.4 260.3" stroke="#e0161b" stroke-width="2" fill="none"/><path d="M1081.8 257.0L1086.7 257.8L1084.0 261.8Z" fill="#e0161b"/><path d="M1098.2 251.0L1093.3 250.2L1096.0 246.2Z" fill="#e0161b"/><path d="M1090.0 249.5V255.0" stroke="#e0161b" stroke-width="1.8"/><circle cx="1090.0" cy="257.8" r="1" fill="#e0161b"/><path d="M1105.1 258.5A6.8 6.8 0 0 1 1108.1 247.8" stroke="#e0161b" stroke-width="2" fill="none"/><path d="M1116.2 249.8A6.8 6.8 0 0 1 1113.0 260.3" stroke="#e0161b" stroke-width="2" fill="none"/><path d="M1102.4 257.0L1107.3 257.8L1104.6 261.8Z" fill="#e0161b"/><path d="M1118.8 251.0L1113.9 250.2L1116.6 246.2Z" fill="#e0161b"/><path d="M1110.6 249.5V255.0" stroke="#e0161b" stroke-width="1.8"/><circle cx="1110.6" cy="257.8" r="1" fill="#e0161b"/><circle cx="1131.3" cy="254.0" r="7.2" stroke="#e0161b" stroke-width="1.8" fill="none" stroke-dasharray="4.3 2.3"/><path d="M1130.7 250.2V254.5L1134.1 257.0" stroke="#e0161b" stroke-width="1.3" fill="none"/><path d="M1023.5 289.7L1036.5 302.3M1036.5 289.7L1023.5 302.3" stroke="#e0161b" stroke-width="1.8" fill="none"/><rect x="1044.3" y="288.2" width="1.8" height="14.6" fill="#000"/><path d="M1044.3 288.2H1051.8V290.0H1057.0V298.4H1051.8V296.6H1045.8Z" fill="#000"/><rect x="1046.8" y="290.0" width="1.5" height="1.5" fill="#fff"/><rect x="1049.8" y="290.0" width="1.5" height="1.5" fill="#fff"/><rect x="1048.3" y="291.7" width="1.5" height="1.5" fill="#fff"/><rect x="1051.3" y="291.7" width="1.5" height="1.5" fill="#fff"/><rect x="1046.8" y="293.4" width="1.5" height="1.5" fill="#fff"/><rect x="1049.8" y="293.4" width="1.5" height="1.5" fill="#fff"/><rect x="1052.8" y="293.4" width="1.5" height="1.5" fill="#fff"/><rect x="1054.3" y="295.2" width="1.5" height="1.5" fill="#fff"/><rect x="1051.3" y="295.2" width="1.5" height="1.5" fill="#fff"/><rect x="1052.8" y="296.8" width="1.5" height="1.5" fill="#fff"/><circle cx="1069.6" cy="296.0" r="7.3" stroke="#e0161b" stroke-width="1.8" fill="none"/><path d="M1066.2 297.8A3.9 3.9 0 0 1 1069.0 292.4M1073.0 294.2A3.9 3.9 0 0 1 1070.2 299.6" stroke="#e0161b" stroke-width="1.4" fill="none"/><path d="M1068.0 290.4L1071.2 292.6L1068.2 294.4ZM1071.2 301.6L1068.0 299.4L1071.0 297.6Z" fill="#e0161b"/><circle cx="1089.8" cy="296.0" r="7.3" stroke="#e0161b" stroke-width="1.8" fill="none"/><path d="M1086.4 297.8A3.9 3.9 0 0 1 1089.2 292.4M1093.2 294.2A3.9 3.9 0 0 1 1090.4 299.6" stroke="#e0161b" stroke-width="1.4" fill="none"/><path d="M1088.2 290.4L1091.4 292.6L1088.4 294.4ZM1091.4 301.6L1088.2 299.4L1091.2 297.6Z" fill="#e0161b"/><circle cx="1110.3" cy="296.0" r="7.3" stroke="#e0161b" stroke-width="1.8" fill="none"/><path d="M1106.9 297.8A3.9 3.9 0 0 1 1109.7 292.4M1113.7 294.2A3.9 3.9 0 0 1 1110.9 299.6" stroke="#e0161b" stroke-width="1.4" fill="none"/><path d="M1108.7 290.4L1111.9 292.6L1108.9 294.4ZM1111.9 301.6L1108.7 299.4L1111.7 297.6Z" fill="#e0161b"/><path d="M1023.3 337.9L1027.5 342.2L1036.9 332.4" stroke="#17801f" stroke-width="1.7" fill="none"/><rect x="1044.3" y="330.2" width="1.8" height="14.6" fill="#000"/><path d="M1044.3 330.2H1051.8V332.0H1057.0V340.4H1051.8V338.6H1045.8Z" fill="#000"/><rect x="1046.8" y="332.0" width="1.5" height="1.5" fill="#fff"/><rect x="1049.8" y="332.0" width="1.5" height="1.5" fill="#fff"/><rect x="1048.3" y="333.7" width="1.5" height="1.5" fill="#fff"/><rect x="1051.3" y="333.7" width="1.5" height="1.5" fill="#fff"/><rect x="1046.8" y="335.4" width="1.5" height="1.5" fill="#fff"/><rect x="1049.8" y="335.4" width="1.5" height="1.5" fill="#fff"/><rect x="1052.8" y="335.4" width="1.5" height="1.5" fill="#fff"/><rect x="1054.3" y="337.2" width="1.5" height="1.5" fill="#fff"/><rect x="1051.3" y="337.2" width="1.5" height="1.5" fill="#fff"/><rect x="1052.8" y="338.8" width="1.5" height="1.5" fill="#fff"/><circle cx="1069.6" cy="338.0" r="7.3" stroke="#e0161b" stroke-width="1.8" fill="none"/><path d="M1066.2 339.8A3.9 3.9 0 0 1 1069.0 334.4M1073.0 336.2A3.9 3.9 0 0 1 1070.2 341.6" stroke="#e0161b" stroke-width="1.4" fill="none"/><path d="M1068.0 332.4L1071.2 334.6L1068.2 336.4ZM1071.2 343.6L1068.0 341.4L1071.0 339.6Z" fill="#e0161b"/><path d="M1084.5 342.5A6.8 6.8 0 0 1 1087.5 331.8" stroke="#e0161b" stroke-width="2" fill="none"/><path d="M1095.6 333.8A6.8 6.8 0 0 1 1092.4 344.3" stroke="#e0161b" stroke-width="2" fill="none"/><path d="M1081.8 341.0L1086.7 341.8L1084.0 345.8Z" fill="#e0161b"/><path d="M1098.2 335.0L1093.3 334.2L1096.0 330.2Z" fill="#e0161b"/><path d="M1090.0 333.5V339.0" stroke="#e0161b" stroke-width="1.8"/><circle cx="1090.0" cy="341.8" r="1" fill="#e0161b"/><path d="M1105.1 342.5A6.8 6.8 0 0 1 1108.1 331.8" stroke="#e0161b" stroke-width="2" fill="none"/><path d="M1116.2 333.8A6.8 6.8 0 0 1 1113.0 344.3" stroke="#e0161b" stroke-width="2" fill="none"/><path d="M1102.4 341.0L1107.3 341.8L1104.6 345.8Z" fill="#e0161b"/><path d="M1118.8 335.0L1113.9 334.2L1116.6 330.2Z" fill="#e0161b"/><path d="M1110.6 333.5V339.0" stroke="#e0161b" stroke-width="1.8"/><circle cx="1110.6" cy="341.8" r="1" fill="#e0161b"/><circle cx="1131.3" cy="338.0" r="7.2" stroke="#e0161b" stroke-width="1.8" fill="none" stroke-dasharray="4.3 2.3"/><path d="M1130.7 334.2V338.5L1134.1 341.0" stroke="#e0161b" stroke-width="1.3" fill="none"/><path d="M1023.5 374.2L1036.5 386.8M1036.5 374.2L1023.5 386.8" stroke="#e0161b" stroke-width="1.8" fill="none"/><rect x="1044.3" y="372.7" width="1.8" height="14.6" fill="#000"/><path d="M1044.3 372.7H1051.8V374.5H1057.0V382.9H1051.8V381.1H1045.8Z" fill="#000"/><rect x="1046.8" y="374.5" width="1.5" height="1.5" fill="#fff"/><rect x="1049.8" y="374.5" width="1.5" height="1.5" fill="#fff"/><rect x="1048.3" y="376.2" width="1.5" height="1.5" fill="#fff"/><rect x="1051.3" y="376.2" width="1.5" height="1.5" fill="#fff"/><rect x="1046.8" y="377.9" width="1.5" height="1.5" fill="#fff"/><rect x="1049.8" y="377.9" width="1.5" height="1.5" fill="#fff"/><rect x="1052.8" y="377.9" width="1.5" height="1.5" fill="#fff"/><rect x="1054.3" y="379.7" width="1.5" height="1.5" fill="#fff"/><rect x="1051.3" y="379.7" width="1.5" height="1.5" fill="#fff"/><rect x="1052.8" y="381.3" width="1.5" height="1.5" fill="#fff"/><circle cx="1069.6" cy="380.5" r="7.3" stroke="#e0161b" stroke-width="1.8" fill="none"/><path d="M1066.2 382.3A3.9 3.9 0 0 1 1069.0 376.9M1073.0 378.7A3.9 3.9 0 0 1 1070.2 384.1" stroke="#e0161b" stroke-width="1.4" fill="none"/><path d="M1068.0 374.9L1071.2 377.1L1068.2 378.9ZM1071.2 386.1L1068.0 383.9L1071.0 382.1Z" fill="#e0161b"/><circle cx="1089.8" cy="380.5" r="7.3" stroke="#e0161b" stroke-width="1.8" fill="none"/><path d="M1086.4 382.3A3.9 3.9 0 0 1 1089.2 376.9M1093.2 378.7A3.9 3.9 0 0 1 1090.4 384.1" stroke="#e0161b" stroke-width="1.4" fill="none"/><path d="M1088.2 374.9L1091.4 377.1L1088.4 378.9ZM1091.4 386.1L1088.2 383.9L1091.2 382.1Z" fill="#e0161b"/><circle cx="1110.3" cy="380.5" r="7.3" stroke="#e0161b" stroke-width="1.8" fill="none"/><path d="M1106.9 382.3A3.9 3.9 0 0 1 1109.7 376.9M1113.7 378.7A3.9 3.9 0 0 1 1110.9 384.1" stroke="#e0161b" stroke-width="1.4" fill="none"/><path d="M1108.7 374.9L1111.9 377.1L1108.9 378.9ZM1111.9 386.1L1108.7 383.9L1111.7 382.1Z" fill="#e0161b"/><path d="M1023.3 422.9L1027.5 427.2L1036.9 417.4" stroke="#17801f" stroke-width="1.7" fill="none"/><rect x="1064.2" y="415.2" width="1.8" height="14.6" fill="#000"/><path d="M1064.2 415.2H1071.7V417.0H1076.9V425.4H1071.7V423.6H1065.7Z" fill="#000"/><rect x="1066.7" y="417.0" width="1.5" height="1.5" fill="#fff"/><rect x="1069.7" y="417.0" width="1.5" height="1.5" fill="#fff"/><rect x="1068.2" y="418.7" width="1.5" height="1.5" fill="#fff"/><rect x="1071.2" y="418.7" width="1.5" height="1.5" fill="#fff"/><rect x="1066.7" y="420.4" width="1.5" height="1.5" fill="#fff"/><rect x="1069.7" y="420.4" width="1.5" height="1.5" fill="#fff"/><rect x="1072.7" y="420.4" width="1.5" height="1.5" fill="#fff"/><rect x="1074.2" y="422.2" width="1.5" height="1.5" fill="#fff"/><rect x="1071.2" y="422.2" width="1.5" height="1.5" fill="#fff"/><rect x="1072.7" y="423.8" width="1.5" height="1.5" fill="#fff"/><path d="M1023.3 464.9L1027.5 469.2L1036.9 459.4" stroke="#17801f" stroke-width="1.7" fill="none"/><rect x="1048.2" y="457.2" width="1.8" height="14.6" fill="#000"/><path d="M1048.2 457.2H1055.7V459.0H1060.9V467.4H1055.7V465.6H1049.7Z" fill="#000"/><rect x="1050.7" y="459.0" width="1.5" height="1.5" fill="#fff"/><rect x="1053.7" y="459.0" width="1.5" height="1.5" fill="#fff"/><rect x="1052.2" y="460.7" width="1.5" height="1.5" fill="#fff"/><rect x="1055.2" y="460.7" width="1.5" height="1.5" fill="#fff"/><rect x="1050.7" y="462.4" width="1.5" height="1.5" fill="#fff"/><rect x="1053.7" y="462.4" width="1.5" height="1.5" fill="#fff"/><rect x="1056.7" y="462.4" width="1.5" height="1.5" fill="#fff"/><rect x="1058.2" y="464.2" width="1.5" height="1.5" fill="#fff"/><rect x="1055.2" y="464.2" width="1.5" height="1.5" fill="#fff"/><rect x="1056.7" y="465.8" width="1.5" height="1.5" fill="#fff"/><circle cx="1078.0" cy="465.0" r="7.3" stroke="#e0161b" stroke-width="1.8" fill="none"/><path d="M1074.6 466.8A3.9 3.9 0 0 1 1077.4 461.4M1081.4 463.2A3.9 3.9 0 0 1 1078.6 468.6" stroke="#e0161b" stroke-width="1.4" fill="none"/><path d="M1076.4 459.4L1079.6 461.6L1076.6 463.4ZM1079.6 470.6L1076.4 468.4L1079.4 466.6Z" fill="#e0161b"/><circle cx="1102.1" cy="465.0" r="7.2" stroke="#e0161b" stroke-width="1.8" fill="none" stroke-dasharray="4.3 2.3"/><path d="M1101.5 461.2V465.5L1104.9 468.0" stroke="#e0161b" stroke-width="1.3" fill="none"/><path d="M1023.3 506.9L1027.5 511.2L1036.9 501.4" stroke="#17801f" stroke-width="1.7" fill="none"/><rect x="1064.2" y="499.2" width="1.8" height="14.6" fill="#000"/><path d="M1064.2 499.2H1071.7V501.0H1076.9V509.4H1071.7V507.6H1065.7Z" fill="#000"/><rect x="1066.7" y="501.0" width="1.5" height="1.5" fill="#fff"/><rect x="1069.7" y="501.0" width="1.5" height="1.5" fill="#fff"/><rect x="1068.2" y="502.7" width="1.5" height="1.5" fill="#fff"/><rect x="1071.2" y="502.7" width="1.5" height="1.5" fill="#fff"/><rect x="1066.7" y="504.4" width="1.5" height="1.5" fill="#fff"/><rect x="1069.7" y="504.4" width="1.5" height="1.5" fill="#fff"/><rect x="1072.7" y="504.4" width="1.5" height="1.5" fill="#fff"/><rect x="1074.2" y="506.2" width="1.5" height="1.5" fill="#fff"/><rect x="1071.2" y="506.2" width="1.5" height="1.5" fill="#fff"/><rect x="1072.7" y="507.8" width="1.5" height="1.5" fill="#fff"/><path d="M1023.5 543.0L1036.5 555.5M1036.5 543.0L1023.5 555.5" stroke="#e0161b" stroke-width="1.8" fill="none"/><rect x="1044.3" y="541.5" width="1.8" height="14.6" fill="#000"/><path d="M1044.3 541.5H1051.8V543.2H1057.0V551.7H1051.8V549.9H1045.8Z" fill="#000"/><rect x="1046.8" y="543.2" width="1.5" height="1.5" fill="#fff"/><rect x="1049.8" y="543.2" width="1.5" height="1.5" fill="#fff"/><rect x="1048.3" y="545.0" width="1.5" height="1.5" fill="#fff"/><rect x="1051.3" y="545.0" width="1.5" height="1.5" fill="#fff"/><rect x="1046.8" y="546.7" width="1.5" height="1.5" fill="#fff"/><rect x="1049.8" y="546.7" width="1.5" height="1.5" fill="#fff"/><rect x="1052.8" y="546.7" width="1.5" height="1.5" fill="#fff"/><rect x="1054.3" y="548.5" width="1.5" height="1.5" fill="#fff"/><rect x="1051.3" y="548.5" width="1.5" height="1.5" fill="#fff"/><rect x="1052.8" y="550.1" width="1.5" height="1.5" fill="#fff"/><circle cx="1069.6" cy="549.2" r="7.3" stroke="#e0161b" stroke-width="1.8" fill="none"/><path d="M1066.2 551.0A3.9 3.9 0 0 1 1069.0 545.6M1073.0 547.5A3.9 3.9 0 0 1 1070.2 552.9" stroke="#e0161b" stroke-width="1.4" fill="none"/><path d="M1068.0 543.6L1071.2 545.9L1068.2 547.6ZM1071.2 554.9L1068.0 552.6L1071.0 550.9Z" fill="#e0161b"/><circle cx="1089.8" cy="549.2" r="7.3" stroke="#e0161b" stroke-width="1.8" fill="none"/><path d="M1086.4 551.0A3.9 3.9 0 0 1 1089.2 545.6M1093.2 547.5A3.9 3.9 0 0 1 1090.4 552.9" stroke="#e0161b" stroke-width="1.4" fill="none"/><path d="M1088.2 543.6L1091.4 545.9L1088.4 547.6ZM1091.4 554.9L1088.2 552.6L1091.2 550.9Z" fill="#e0161b"/><circle cx="1110.3" cy="549.2" r="7.3" stroke="#e0161b" stroke-width="1.8" fill="none"/><path d="M1106.9 551.0A3.9 3.9 0 0 1 1109.7 545.6M1113.7 547.5A3.9 3.9 0 0 1 1110.9 552.9" stroke="#e0161b" stroke-width="1.4" fill="none"/><path d="M1108.7 543.6L1111.9 545.9L1108.9 547.6ZM1111.9 554.9L1108.7 552.6L1111.7 550.9Z" fill="#e0161b"/><path d="M1023.3 591.6L1027.5 596.0L1036.9 586.1" stroke="#17801f" stroke-width="1.7" fill="none"/><rect x="1064.2" y="584.0" width="1.8" height="14.6" fill="#000"/><path d="M1064.2 584.0H1071.7V585.8H1076.9V594.2H1071.7V592.4H1065.7Z" fill="#000"/><rect x="1066.7" y="585.8" width="1.5" height="1.5" fill="#fff"/><rect x="1069.7" y="585.8" width="1.5" height="1.5" fill="#fff"/><rect x="1068.2" y="587.5" width="1.5" height="1.5" fill="#fff"/><rect x="1071.2" y="587.5" width="1.5" height="1.5" fill="#fff"/><rect x="1066.7" y="589.2" width="1.5" height="1.5" fill="#fff"/><rect x="1069.7" y="589.2" width="1.5" height="1.5" fill="#fff"/><rect x="1072.7" y="589.2" width="1.5" height="1.5" fill="#fff"/><rect x="1074.2" y="591.0" width="1.5" height="1.5" fill="#fff"/><rect x="1071.2" y="591.0" width="1.5" height="1.5" fill="#fff"/><rect x="1072.7" y="592.6" width="1.5" height="1.5" fill="#fff"/></svg>
<svg class="i" style="left:0;top:0" width="1" height="1"><rect x="72.8" y="252.9" width="8" height="2.2" fill="#d9e0f5"/><rect x="92.8" y="294.9" width="8" height="2.2" fill="#d9e0f5"/><rect x="95.7" y="292.0" width="2.2" height="8" fill="#d9e0f5"/><rect x="92.8" y="336.9" width="8" height="2.2" fill="#d9e0f5"/><rect x="112.8" y="379.4" width="8" height="2.2" fill="#d9e0f5"/><rect x="115.7" y="376.5" width="2.2" height="8" fill="#d9e0f5"/><rect x="112.8" y="421.9" width="8" height="2.2" fill="#d9e0f5"/><rect x="115.7" y="419.0" width="2.2" height="8" fill="#d9e0f5"/><rect x="112.8" y="463.9" width="8" height="2.2" fill="#d9e0f5"/><rect x="132.8" y="505.9" width="8" height="2.2" fill="#d9e0f5"/><rect x="135.7" y="503.0" width="2.2" height="8" fill="#d9e0f5"/><rect x="132.8" y="548.1" width="8" height="2.2" fill="#d9e0f5"/><rect x="135.7" y="545.2" width="2.2" height="8" fill="#d9e0f5"/><rect x="92.8" y="590.6" width="8" height="2.2" fill="#d9e0f5"/><rect x="95.7" y="587.8" width="2.2" height="8" fill="#d9e0f5"/></svg>
<svg class="i" style="left:0;top:0" width="1" height="1"><path d="M112.5 296.5L115.8 299.5L121.8 293" stroke="#3b6db3" stroke-width="1.5" fill="none"/></svg>
<div class="a" style="left:1145px;top:198px;width:1px;height:830px;background:#dcdcdc"></div>
<div class="a" style="left:1146px;top:256px;width:763px;height:1px;background:#e2e2e2"></div>
<div class="a" style="left:1206.5px;top:203px;width:1px;height:48px;background:#dcdde1"></div>
<div class="rl" style="left:1135.8px;top:237.2px">Open</div>
<div class="rl" style="left:1192.4px;top:237.2px">Edit</div>
<div class="rl" style="left:1227.8px;top:237.2px;color:#b5b8bf">Save</div>
<div class="rl" style="left:1267.3px;top:237.2px">Promote</div>
<div class="rl" style="left:1309.0px;top:237.2px">Demote</div>
<div class="rl" style="left:1347.8px;top:237.2px">Finalize</div>
<div class="rl" style="left:1385.0px;top:237.2px">Revise</div>
<div class="rl" style="left:1422.3px;top:237.2px">Refresh</div>
<div class="rl" style="left:1842.3px;top:234.0px">Views</div>
<svg class="i" style="left:0;top:0" width="1" height="1" fill="none" stroke="#5a5f6d" stroke-width="1.7" stroke-linecap="round" stroke-linejoin="round"><path d="M1174 212H1168.5Q1166.8 212 1166.8 213.7V224.3Q1166.8 226 1168.5 226H1179.5Q1181.2 226 1181.2 224.3V219"/><path d="M1173.8 218.7L1181.2 211.5M1176.3 211.5H1181.3V216.5"/><path d="M1185.8 220L1190 224.2L1194.2 220" stroke-width="1.9"/><path d="M1225.3 226.8H1242" stroke-width="1.6"/><path d="M1227 222.5L1235.8 213.7L1238.8 216.7L1230 225.5H1227Z" stroke-width="1.5"/><path d="M1234 215.5L1237 218.5" stroke-width="1.3"/><path d="M1308.2 223.5V212.5" stroke-width="1.9"/><path d="M1304.4 216.5L1308.2 211.3L1312 216.5Z" fill="#5a5f6d"/><path d="M1300.8 221H1304.3M1312.2 221H1315.7M1300.8 226H1315.7" stroke-width="1.9"/><path d="M1350.3 215V223.5" stroke-width="1.9"/><path d="M1346.5 221L1350.3 226.2L1354.1 221Z" fill="#5a5f6d"/><path d="M1342.8 216.7H1346.3M1354.3 216.7H1357.8M1342.8 211.8H1357.8" stroke-width="1.9"/><path d="M1382.5 227V212.3Q1386 210.8 1389.5 212.3Q1393 213.8 1396.5 212.3V222Q1393 223.5 1389.5 222Q1386 220.5 1382.5 222" stroke-width="1.3"/><path d="M1387 211.7V221.5M1391.8 213V222.8M1382.5 217.2Q1386 215.7 1389.5 217.2Q1393 218.7 1396.5 217.2" stroke-width="1.1"/><path d="M1426 226V219.5L1420.3 213M1426 219.5L1432 213.3M1419.7 216.5V212.6H1423.5M1428.5 212.6H1432.3V216.5" stroke-width="1.8"/><path d="M1467.5 214.7A6.3 6.3 0 1 0 1469.2 220" stroke-width="1.8"/><path d="M1469.8 211.3V216.5H1464.6Z" fill="#5a5f6d" stroke-width="1"/><rect x="1875.8" y="211.8" width="12.6" height="12.4" rx="1" stroke="#2d3039" stroke-width="1.6"/><path d="M1880 212V224M1884.2 212V224" stroke="#2d3039" stroke-width="1.5"/></svg>
<svg class="i" style="left:0;top:0" width="1" height="1" fill="none" stroke="#b8bbc3" stroke-width="1.5"><path d="M1262.5 212H1273.5L1276.5 215V225.5H1262.5Z" stroke-linejoin="round"/><rect x="1265" y="213.3" width="8" height="2.5" fill="#b8bbc3" stroke="none"/><circle cx="1269.5" cy="221.3" r="1.7" fill="#b8bbc3" stroke="none"/></svg>
<svg class="i" style="left:1151.3px;top:273px" width="33.3" height="13"><defs><linearGradient id="oh" x1="0" y1="0" x2="0" y2="1"><stop offset="0" stop-color="#f2f2f4"/><stop offset="1" stop-color="#dedfe3"/></linearGradient></defs><rect width="33.3" height="13" fill="url(#oh)"/><path d="M2.5 10.3L25 3.5L26 5.5L3.5 12Z" fill="#23279c"/><path d="M25 3.5L31.5 1.8L32 3.2L26 5.5Z" fill="#8f8c70"/><path d="M2.5 10.3L25 3.5" stroke="#5057d0" stroke-width="0.6"/></svg>
<svg class="i" style="left:1195.3px;top:273.5px" width="17" height="17" fill="none" stroke="#2e3d92" stroke-width="1.5" stroke-linejoin="round"><path d="M0.8 4.3L6.3 0.6L16 4.2L10.2 7.7Z"/><path d="M0.8 4.3V11.8L10.2 15.5L16 12V4.2"/><path d="M0.8 8.2L10.2 11.7L16 8.1"/><path d="M10.2 7.7V15.5" stroke-width="0"/></svg>
<div class="t" style="left:1218.5px;top:272px;font-size:16.5px;color:#3d5096">Drone Harness Subassembly (A)</div>
<svg class="i" style="left:0;top:0" width="1" height="1"><path d="M1882.5 282L1888.3 276L1894.1 282" stroke="#1e2026" stroke-width="1.8" fill="none"/></svg>
<div class="a" style="left:1146px;top:302px;width:763px;height:48px;background:#f1f2f5"></div>
<div class="a" style="left:1146px;top:350px;width:763px;height:2px;background:#dcdfe8"></div>
<div class="a" style="left:1722px;top:313px;width:106px;height:25.6px;background:#fff;border-radius:4px"></div>
<div class="a" style="left:1722px;top:347.8px;width:106px;height:2.2px;background:#0f2a5c"></div>
<div class="tab" style="left:1199.7px">Information</div>
<div class="tab" style="left:1317.6px">Relations</div>
<div class="tab" style="left:1421.9px">Lifecycle</div>
<div class="tab" style="left:1529.3px">History</div>
<div class="tab" style="left:1625.9px">Collaboration</div>
<div class="tab" style="left:1757.6px;color:#1b2e5c;-webkit-text-stroke:0.45px #1b2e5c">Summary</div>
<div class="a" style="left:1862px;top:314px;width:15px;height:24px;overflow:hidden"><div class="tab" style="left:4px;top:4px">Re</div></div>
<svg class="i" style="left:0;top:0" width="1" height="1" fill="none" stroke="#5b5e67" stroke-width="1.5" stroke-linecap="round" stroke-linejoin="round"><path d="M1164.8 319.3L1159 324.3L1164.8 329.3" stroke="#1e2026" stroke-width="1.9"/><path d="M1889.6 319.3L1895.4 324.3L1889.6 329.3" stroke="#1e2026" stroke-width="1.9"/><circle cx="1186.7" cy="325.8" r="6.2" stroke-width="1.4"/><path d="M1186.7 324.5V329" stroke-width="1.5"/><circle cx="1186.7" cy="322.3" r="0.7" fill="#5b5e67" stroke="none"/><path d="M1295.5 323.5H1294.2A2.4 2.4 0 0 0 1294.2 328.3H1295.5M1301.5 323.5H1302.8A2.4 2.4 0 0 1 1302.8 328.3H1301.5M1295.5 325.9H1301.5" stroke-width="1.4"/><path d="M1398.3 324A6.5 6.5 0 0 1 1408.3 321.5M1408.8 328.5A6.5 6.5 0 0 1 1398.5 331" stroke-width="1.5"/><path d="M1397.2 320.5V324.5H1401M1409.8 332V328H1406" stroke-width="1.4"/><path d="M1506.6 322.4A5.9 5.9 0 1 1 1505.5 327" stroke-width="1.5"/><path d="M1505.5 320V323.3H1508.8" stroke-width="1.4"/><path d="M1511 323.2V326.5L1513.3 328.6" stroke-width="1.4"/><circle cx="1605.3" cy="322.5" r="2.6" stroke-width="1.4"/><path d="M1600.5 331.8V330.5A3.8 3.8 0 0 1 1610 330.5V331.8M1609.8 320.5A2 2 0 1 1 1610.3 324.6M1611.2 327.3A3.3 3.3 0 0 1 1613.3 330V331.8" stroke-width="1.4"/><path d="M1734 320.5H1740.5L1744.3 324.3V330.8H1734Z" stroke="#1b2e5c" stroke-width="1.6"/><path d="M1736.6 323V323.7M1736.6 325.8V326.5M1736.6 328.6V329.3" stroke="#1b2e5c" stroke-width="1.3"/><path d="M1844.5 322.3L1841.7 325.7L1844.5 329.1M1850.7 322.3L1853.5 325.7L1850.7 329.1M1846.5 325.7H1848.7" stroke="#6b6e76" stroke-width="1.3"/></svg>
<div class="a" style="left:1146px;top:352px;width:763px;height:48.5px;background:#f3f4f6"></div>
<div class="a" style="left:1149.5px;top:356.3px;width:630px;height:39.2px;border:1px solid #dedfe3;border-radius:5px;background:#fff"></div>
<div class="t" style="left:1160.3px;top:367.5px;font-size:15.5px;color:#24262d">Item Summary</div>
<svg class="i" style="left:0;top:0" width="1" height="1"><path d="M1755.3 373.2H1764.5L1759.9 378.6Z" fill="#1e2026"/></svg>
<div class="a" style="left:1792.8px;top:359px;width:113px;height:33.5px;background:#10357a;border-radius:8px;box-shadow:0 1px 2px rgba(0,0,0,0.2)"></div>
<svg class="i" style="left:0;top:0" width="1" height="1" fill="none" stroke="#fff" stroke-width="1.7" stroke-linejoin="round"><path d="M1822 372.3V368.8H1832.8V372.3"/><path d="M1821.8 380.5H1819.8V374Q1819.8 372.3 1821.5 372.3H1833.3Q1835 372.3 1835 374V380.5H1833"/><rect x="1822" y="377.3" width="10.8" height="6.2"/><circle cx="1832.3" cy="375.3" r="0.6" fill="#fff" stroke="none"/></svg>
<div class="t" style="left:1845.5px;top:368.5px;font-size:16px;font-weight:bold;color:#fff">Print</div>
<div class="a" style="left:1146px;top:400px;width:763px;height:1px;background:#e1e3e8"></div>
<div class="a" style="left:1887px;top:401px;width:18px;height:626px;background:#fafafa"></div>
<div class="a" style="left:1905px;top:401px;width:3px;height:626px;background:#e6e6e6"></div>
<svg class="i" style="left:0;top:0" width="1" height="1" fill="#8a8a8a"><path d="M1896.5 407.3L1902.3 416.2H1890.7Z" stroke="#8a8a8a" stroke-width="1" stroke-linejoin="round"/><path d="M1896.5 1022.7L1902.3 1013.8H1890.7Z" stroke="#8a8a8a" stroke-width="1" stroke-linejoin="round"/></svg>
<div class="a" style="left:1891.2px;top:600.2px;width:10.8px;height:125.5px;background:#8f8f8f;border-radius:5.4px"></div>
<div class="sh" style="left:1175.8px;top:407.0px">In Change:</div>
<div class="sm" style="left:1373.7px;top:407.0px">False</div>
<div class="a" style="left:1169px;top:440px;width:696px;height:1px;background:#e8e8e8"></div>
<div class="sh" style="left:1175.8px;top:449.9px">Change Requests:</div>
<div class="sh2" style="left:1373.5px;top:449.4px">Name</div>
<div class="sh2" style="left:1487.5px;top:449.4px">Revision</div>
<div class="sh2" style="left:1550.0px;top:449.4px">State</div>
<div class="sh2" style="left:1626.3px;top:449.4px">Type</div>
<div class="sh2" style="left:1695.0px;top:449.4px">Owner</div>
<div class="sh2" style="left:1790.5px;top:449.4px">ID</div>
<div class="a" style="left:1373px;top:476.4px;width:485px;height:1px;background:#bdbdbd"></div>
<div class="sm" style="left:1373.5px;top:484.1px">Addition of</div>
<div class="sm" style="left:1373.5px;top:505.2px">Cable Routing</div>
<div class="sm" style="left:1373.5px;top:526.3px">Clips in Drone</div>
<div class="sm" style="left:1373.5px;top:547.4px">Harness</div>
<div class="sm" style="left:1373.5px;top:568.5px">Subassembly</div>
<div class="sm" style="left:1373.5px;top:589.6px">for Improved</div>
<div class="sm" style="left:1373.5px;top:610.7px">Cable Retention</div>
<div class="sm" style="left:1487.5px;top:484.1px">A</div>
<div class="sm" style="left:1550.0px;top:484.1px">Completed</div>
<div class="sm" style="left:1626.3px;top:484.1px">Change</div>
<div class="sm" style="left:1626.3px;top:505.2px">Request</div>
<div class="sm" style="left:1695.0px;top:484.1px">plm</div>
<div class="sm" style="left:1695.0px;top:505.2px">noraengineer</div>
<div class="sm" style="left:1790.5px;top:484.1px">CR-</div>
<div class="sm" style="left:1790.5px;top:505.2px">000185</div>
<div class="a" style="left:1373px;top:639.5px;width:485px;height:1px;background:#e6e6e6"></div>
<div class="a" style="left:1169px;top:658.3px;width:696px;height:1px;background:#e8e8e8"></div>
<div class="sh" style="left:1175.8px;top:667.8px">Change Orders:</div>
<div class="sh2" style="left:1373.5px;top:667.3px">Name</div>
<div class="sh2" style="left:1487.5px;top:667.3px">Revision</div>
<div class="sh2" style="left:1550.0px;top:667.3px">State</div>
<div class="sh2" style="left:1626.3px;top:667.3px">Type</div>
<div class="sh2" style="left:1695.0px;top:667.3px">Owner</div>
<div class="sh2" style="left:1790.5px;top:667.3px">ID</div>
<div class="a" style="left:1373px;top:694.3px;width:485px;height:1px;background:#bdbdbd"></div>
<div class="sm" style="left:1373.5px;top:702.0px">CO for Addition</div>
<div class="sm" style="left:1373.5px;top:723.1px">of Cable</div>
<div class="sm" style="left:1373.5px;top:744.2px">Routing Clips in</div>
<div class="sm" style="left:1373.5px;top:765.3px">Drone Harness</div>
<div class="sm" style="left:1373.5px;top:786.4px">Subassembly</div>
<div class="sm" style="left:1373.5px;top:807.5px">for Improved</div>
<div class="sm" style="left:1373.5px;top:828.6px">Cable Retention</div>
<div class="sm" style="left:1487.5px;top:702.0px">A</div>
<div class="sm" style="left:1550.0px;top:702.0px">Completed</div>
<div class="sm" style="left:1626.3px;top:702.0px">Change</div>
<div class="sm" style="left:1626.3px;top:723.1px">Order</div>
<div class="sm" style="left:1695.0px;top:702.0px">plm</div>
<div class="sm" style="left:1695.0px;top:723.1px">noraengineer</div>
<div class="sm" style="left:1790.5px;top:702.0px">CO-</div>
<div class="sm" style="left:1790.5px;top:723.1px">000182</div>
<div class="a" style="left:1373px;top:857.4px;width:485px;height:1px;background:#e6e6e6"></div>
<div class="a" style="left:1169px;top:876.2px;width:696px;height:1px;background:#e8e8e8"></div>
<div class="sh" style="left:1175.8px;top:885.7px">Change Tasks:</div>
<div class="sh2" style="left:1373.5px;top:885.2px">Name</div>
<div class="sh2" style="left:1485.6px;top:885.2px">Revision</div>
<div class="sh2" style="left:1548.5px;top:885.2px">State</div>
<div class="sh2" style="left:1624.8px;top:885.2px">Type</div>
<div class="sh2" style="left:1694.6px;top:885.2px">Assignees</div>
<div class="sh2" style="left:1788.3px;top:885.2px">ID</div>
<div class="a" style="left:1373px;top:912.2px;width:485px;height:1px;background:#bdbdbd"></div>
<div class="sm" style="left:1373.5px;top:919.9px">Create and Add</div>
<div class="sm" style="left:1373.5px;top:941.0px">Cable Routing</div>
<div class="sm" style="left:1373.5px;top:962.1px">Clips to</div>
<div class="sm" style="left:1373.5px;top:983.2px">Harness</div>
<div class="sm" style="left:1485.6px;top:919.9px">A</div>
<div class="sm" style="left:1548.5px;top:919.9px">Completed</div>
<div class="sm" style="left:1624.8px;top:919.9px">Change</div>
<div class="sm" style="left:1624.8px;top:941.0px">Task</div>
<div class="sm" style="left:1694.6px;top:919.9px">plm.tester3</div>
<div class="sm" style="left:1788.3px;top:919.9px">CT-</div>
<div class="sm" style="left:1788.3px;top:941.0px">000181</div>
<div class="a" style="left:1373px;top:1012.0px;width:485px;height:1px;background:#e6e6e6"></div>
<div class="a" style="left:1127.2px;top:578px;width:17.6px;height:35.6px;background:#9499a3;border-radius:4px 0 0 4px"></div>
<svg class="i" style="left:0;top:0" width="1" height="1"><path d="M1133.3 590.3L1138.3 595.5L1133.3 600.7" stroke="#fff" stroke-width="1.5" fill="none"/></svg>
<div class="a" style="left:56px;top:1021px;width:361px;height:6.5px;background:#808080"></div>
<div class="a" style="left:581.3px;top:1025px;width:35.7px;height:2.6px;background:#9aa3b3"></div>
<div class="a" style="left:523.1px;top:983.1px;width:209px;height:41.3px;background:#e0323c;border-radius:7px"></div>
<div class="t" style="left:548.2px;top:995px;font-size:16.5px;color:#fff">1 Object Selected</div>
<svg class="i" style="left:0;top:0" width="1" height="1"><path d="M694.3 999.6L703.8 1009.1M703.8 999.6L694.3 1009.1" stroke="#fff" stroke-width="1.5"/></svg>
</body></html>
